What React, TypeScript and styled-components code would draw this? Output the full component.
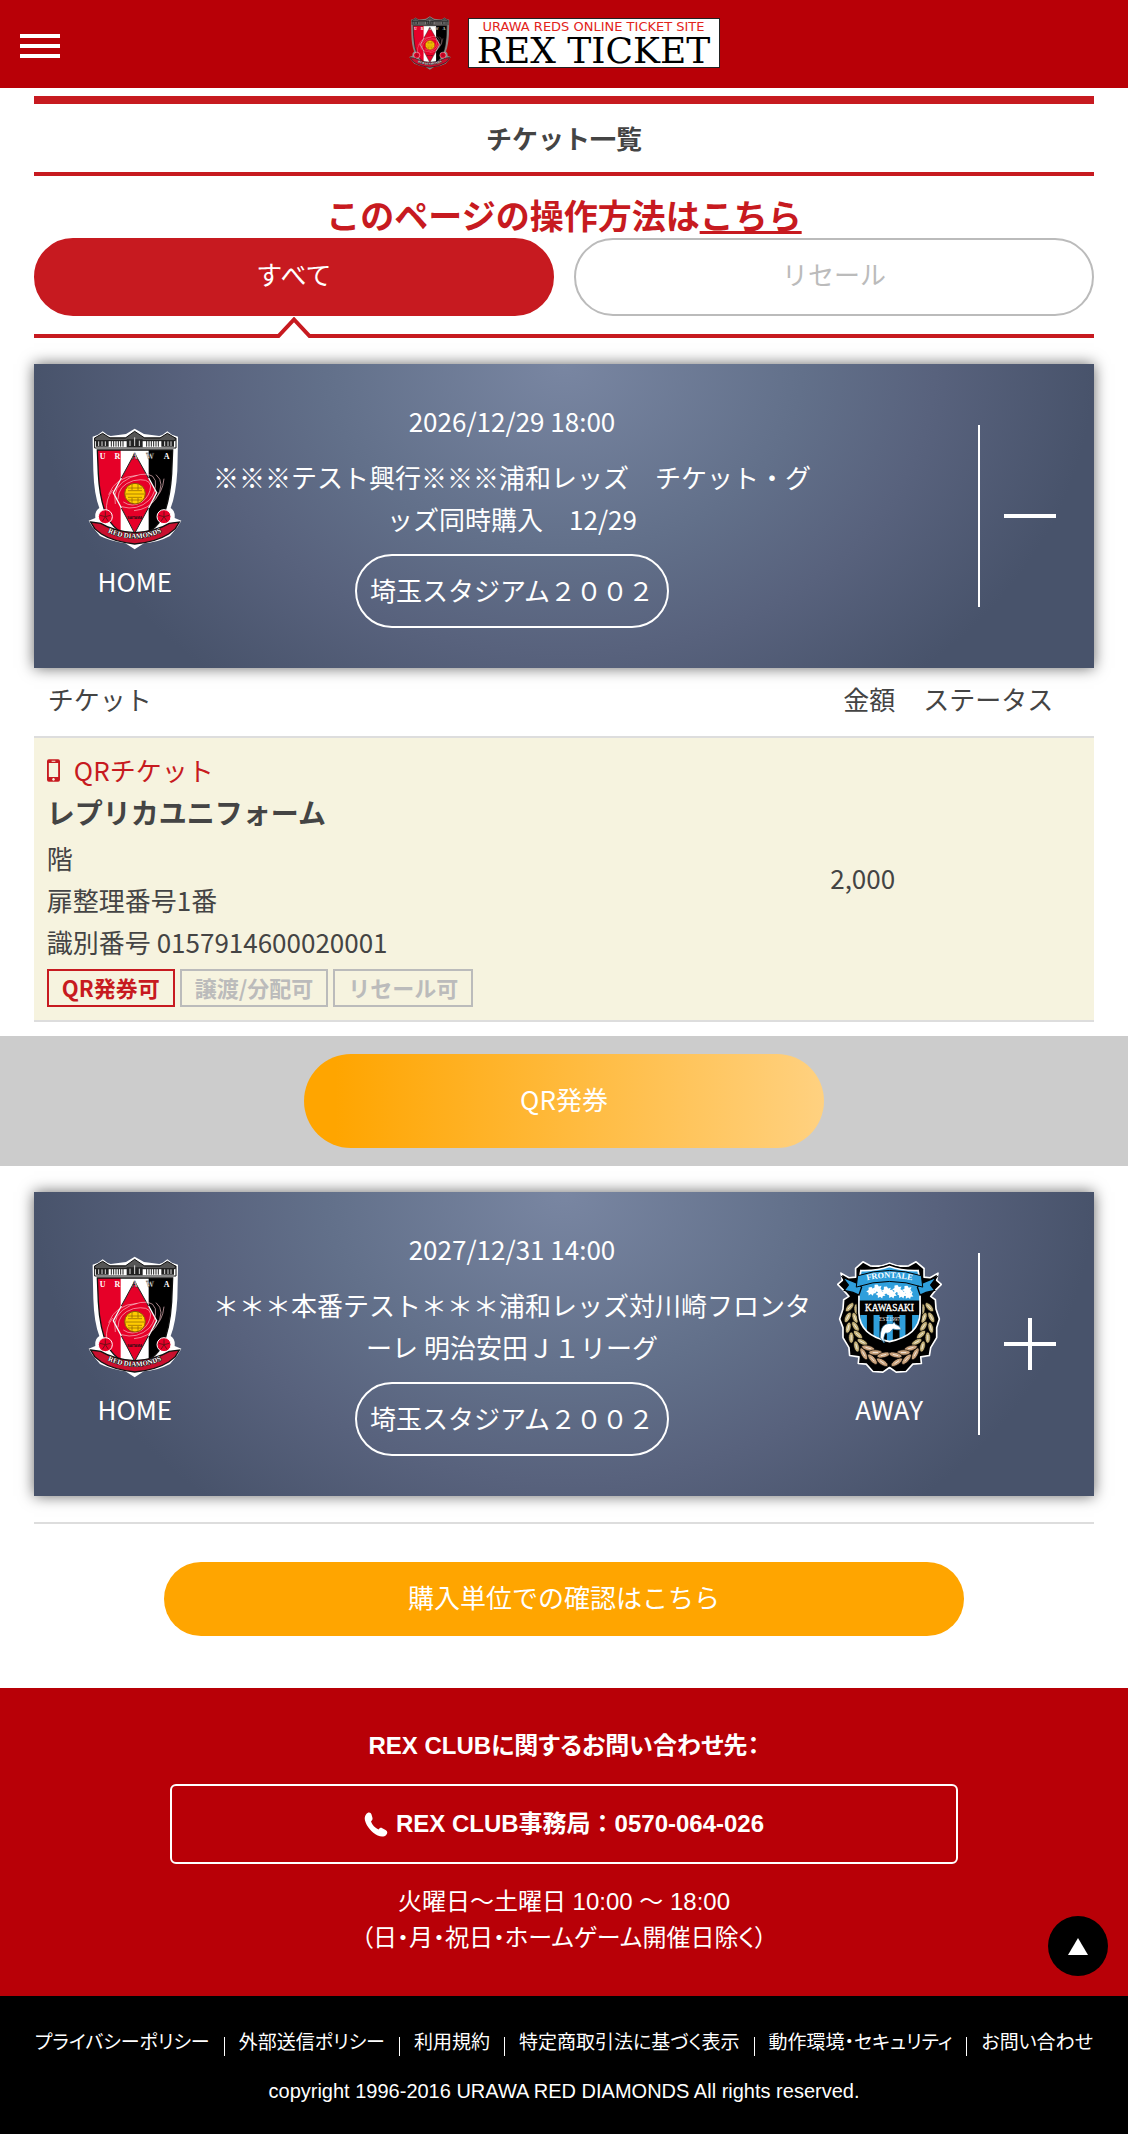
import React from 'react';
import styled, { createGlobalStyle } from 'styled-components';

const RED = '#c71a20';
const DEEP_RED = '#b80007';
const ORANGE = '#ffa500';
const MUTED = '#bbb';

const GlobalStyle = createGlobalStyle`
  *, *::before, *::after { box-sizing: border-box; }
  body {
    margin: 0;
    background: #fff;
    color: #444;
    font-family: "Noto Sans CJK JP", sans-serif;
    font-size: 26px;
    line-height: 42px;
  }
  h1, h2, p, ul { margin: 0; padding: 0; font-size: inherit; }
  button { font: inherit; color: inherit; cursor: pointer; }
  a { color: inherit; }
`;

/* ---------- header ---------- */

const Header = styled.header`
  display: grid;
  grid-template-columns: 1fr auto 1fr;
  align-items: center;
  height: 88px;
  padding: 0 20px;
  background: ${DEEP_RED};
`;

const MenuButton = styled.button`
  display: flex;
  flex-direction: column;
  gap: 6px;
  width: 40px;
  margin-top: 4px;
  padding: 0;
  border: 0;
  background: none;
`;

const MenuBar = styled.span`
  height: 4px;
  background: #fff;
`;

const Brand = styled.a`
  display: flex;
  align-items: center;
  gap: 17px;
  margin-bottom: 3px;
  text-decoration: none;
`;

const BrandPlate = styled.span`
  display: flex;
  flex-direction: column;
  align-items: center;
  width: 252px;
  height: 50px;
  padding-top: 1px;
  border: 1px solid #222;
  background: #fff;
  white-space: nowrap;
`;

const BrandTagline = styled.span`
  font: 13px/14px "DejaVu Sans", sans-serif;
  color: #e2231a;
`;

const BrandName = styled.span`
  font: 36px/34px "DejaVu Serif", serif;
  color: #000;
`;

/* ---------- page frame ---------- */

const Container = styled.div`
  width: 94%;
  margin: 0 auto;
`;

const PageTitle = styled.h1`
  margin-top: 8px;
  border-top: 8px solid ${RED};
  border-bottom: 4px solid ${RED};
  font-weight: 700;
  line-height: 68px;
  text-align: center;
`;

const Guide = styled.p`
  padding: 17px 0 1px;
  color: ${RED};
  font-size: 34px;
  font-weight: 700;
  line-height: 44px;
  text-align: center;
`;

const Tabs = styled.div`
  display: grid;
  grid-template-columns: 1fr 1fr;
  gap: 20px;
`;

const Tab = styled.button<{ $active?: boolean }>`
  height: 78px;
  padding: 0 0 6px;
  border: 2px solid ${p => (p.$active ? RED : MUTED)};
  border-radius: 39px;
  background: ${p => (p.$active ? RED : '#fff')};
  color: ${p => (p.$active ? '#fff' : MUTED)};
`;

const TabLine = styled.div`
  position: relative;
  height: 4px;
  margin-top: 18px;
  background: ${RED};
`;

const TabPointer = styled.svg`
  position: absolute;
  bottom: 0;
  left: calc((100% - 20px) / 4);
  transform: translateX(-50%);
`;

/* ---------- match card ---------- */

const Card = styled.section`
  display: grid;
  grid-template-columns: 142px 1fr 142px 120px;
  align-items: center;
  margin-top: 26px;
  padding: 36px 14px 36px 30px;
  background: radial-gradient(50% 136% at 50% 0, #7986a2, #62708a 45%, #58627d 70%, #48536b);
  box-shadow: 0 0 14px rgba(0, 0, 0, 0.6);
  color: #fff;
  text-align: center;
`;

const Team = styled.div`
  display: flex;
  flex-direction: column;
  align-items: center;
  justify-content: flex-end;
  gap: 10px;
  height: 176px;
  padding-bottom: 2px;
`;

const MatchInfo = styled.div`
  display: flex;
  flex-direction: column;
  align-items: center;
  padding-bottom: 4px;
`;

const MatchName = styled.h2`
  margin: 14px 0;
  padding: 0 6px;
  font-weight: 400;
`;

const Venue = styled.p`
  padding: 0 13px 2px;
  border: 2px solid #fff;
  border-radius: 37px;
  line-height: 68px;
`;

const Toggle = styled.button`
  display: flex;
  align-items: center;
  justify-content: center;
  height: 182px;
  margin-left: 18px;
  padding: 0;
  border: 0;
  border-left: 2px solid #fff;
  background: none;
`;

/* ---------- ticket table ---------- */

const TicketTable = styled.table`
  width: 100%;
  border-spacing: 0;

  th {
    height: 68px;
    padding: 0 14px 6px;
    font-weight: 400;
    text-align: left;
  }
  td {
    padding: 11px 14px 13px;
    border: solid #ddd;
    border-width: 2px 0;
    background: #f6f3df;
  }
  th:nth-child(2), td:nth-child(2) { text-align: right; }
  th:nth-child(3) { width: 185px; }
  td:first-child { padding-left: 13px; }
`;

const TicketKind = styled.p`
  display: flex;
  align-items: center;
  gap: 14px;
  color: ${RED};
`;

const TicketName = styled.p`
  margin-bottom: 4px;
  font-size: 28px;
  font-weight: 700;
`;

const Tags = styled.div`
  display: flex;
  gap: 5px;
  margin-top: 6px;
`;

const Tag = styled.span<{ $on?: boolean }>`
  padding: 0 13px 2px;
  border: 2px solid currentColor;
  color: ${p => (p.$on ? RED : MUTED)};
  font-size: 22px;
  font-weight: 700;
  line-height: 32px;
`;

const IssueBand = styled.div`
  display: flex;
  justify-content: center;
  margin-top: 14px;
  padding: 18px 0;
  background: #ccc;
`;

const IssueButton = styled.button`
  width: 520px;
  height: 94px;
  padding: 0 0 4px;
  border: 0;
  border-radius: 47px;
  background: linear-gradient(90deg, ${ORANGE} 6%, #ffd180);
  color: #fff;
`;

const PurchaseArea = styled.div`
  display: flex;
  justify-content: center;
  margin-top: 26px;
  padding: 38px 0 52px;
  border-top: 2px solid #ddd;
`;

const PurchaseButton = styled.button`
  width: 800px;
  height: 74px;
  padding: 0 0 4px;
  border: 0;
  border-radius: 37px;
  background: ${ORANGE};
  color: #fff;
`;

/* ---------- footer ---------- */

const Contact = styled.section`
  position: relative;
  display: flex;
  flex-direction: column;
  align-items: center;
  padding: 40px 0;
  background: ${DEEP_RED};
  color: #fff;
  font-family: "Liberation Sans", "Noto Sans CJK JP", sans-serif;
  font-feature-settings: "palt";
  font-size: 24px;
  line-height: 36px;
  text-align: center;
`;

const PhoneLink = styled.a`
  display: flex;
  align-items: center;
  justify-content: center;
  gap: 8px;
  width: 788px;
  height: 80px;
  margin: 20px 0;
  border: 2px solid #fff;
  border-radius: 6px;
  font-feature-settings: normal;
  font-weight: 700;
  text-decoration: none;
`;

const ContactTitle = styled.h2`
  font-weight: 700;
`;

const TopButton = styled.button`
  position: absolute;
  right: 20px;
  bottom: 20px;
  display: flex;
  align-items: center;
  justify-content: center;
  width: 60px;
  height: 60px;
  padding: 0;
  border: 0;
  border-radius: 50%;
  background: #000;
`;

const Footer = styled.footer`
  padding: 32px 0 28px;
  background: #000;
  color: #fff;
  font-family: "Liberation Sans", "Noto Sans CJK JP", sans-serif;
  font-feature-settings: "palt";
  font-size: 20px;
  line-height: 30px;
  text-align: center;
`;

const FooterLinks = styled.ul`
  display: flex;
  justify-content: center;
  margin-bottom: 18px;
  font-size: 19px;
  list-style: none;
  white-space: nowrap;

  a { text-decoration: none; }
  li + li {
    display: flex;
    align-items: center;
  }
  li + li::before {
    content: "";
    width: 1px;
    height: 19px;
    margin: 6px 14px 0;
    background: #fff;
  }
`;

/* ---------- drawings ---------- */

const columns = [92, 99, 106, 113, 120, 127, 198, 205, 212, 219, 226, 233];

function UrawaCrest({ width, height, edge = '#fff', id }: { width: number; height: number; edge?: string; id: string }) {
  return (
    <svg width={width} height={height} viewBox="22 22 282 366" role="img" aria-label="浦和レッズ" preserveAspectRatio="none">
      <defs>
        <clipPath id={`${id}-shield`}>
          <path d="M50 88H276L273 160Q268 240 244 296Q205 345 162 360Q119 345 82 296Q57 240 53 160Z" />
        </clipPath>
        <path id={`${id}-ribbon`} d="M76 332Q162 374 248 332" />
      </defs>
      <path
        d="M36 48L52 42L66 32L80 42L90 46L136 40L162 24L190 40L236 46L246 42L260 32L274 42L292 48V62L290 150Q286 220 270 262Q284 270 282 292L302 300L290 320L268 346Q230 366 190 368L162 386L134 368Q90 362 58 346L36 320L24 300L44 292Q42 270 56 262Q40 220 38 150L36 62Z"
        fill={edge}
      />
      <path d="M42 52H286V82H42Z" fill={edge} stroke="#111" strokeWidth="3" />
      <path d="M42 52L66 38L88 52H134L162 32L192 52H238L260 38L284 52V60H42Z" fill="#555" stroke="#111" strokeWidth="3" />
      <path d="M46 60h38v18H46ZM138 56h48v24h-48ZM242 60h38v18h-38Z" fill="#222" />
      <path d="M54 62v14M64 62v14M74 62v14M148 60v16M162 50v26M176 60v16M252 62v14M262 62v14M271 62v14" stroke="#ddd" strokeWidth="3" />
      {columns.map(x => (
        <path key={x} d={`M${x} 60v18`} stroke="#222" strokeWidth="3" />
      ))}
      <g clipPath={`url(#${id}-shield)`}>
        <path d="M40 80h84v290H40z" fill="#e60028" />
        <path d="M120 80h86v290h-86z" fill="#fff" />
        <path d="M204 80h90v290h-90z" fill="#000" />
      </g>
      <path d="M50 88H276L273 160Q268 240 244 296Q205 345 162 360Q119 345 82 296Q57 240 53 160Z" fill="none" stroke="#111" strokeWidth="4" />
      <path d="M162 98L228 216L162 338L98 216Z" fill="#e60028" stroke="#222" strokeWidth="3" />
      <path d="M122 172L98 216L122 262M204 172L228 216L204 262" stroke="#fff" strokeWidth="4" fill="none" />
      <g fill="none" stroke="#f7c3c8" strokeWidth="2">
        <path d="M104 250Q92 196 150 170Q214 146 224 180Q228 212 206 238Q170 272 122 258" />
        <path d="M112 236Q112 194 158 180Q206 170 210 196Q208 226 184 244Q154 262 128 244" />
        <path d="M84 222Q104 168 170 164M226 162Q256 186 226 234Q204 266 160 270M78 272Q74 236 96 208M250 174Q246 218 216 240" />
      </g>
      <circle cx="163" cy="219" r="31" fill="#fc0" stroke="#8a5a00" strokeWidth="3" />
      <path d="M142 202H184M142 210H184M134 220H192M142 230H184M142 238H184M154 190V208M172 190V208M154 232V248M172 232V248" stroke="#8a5a00" strokeWidth="2" />
      <g fill="#fff" fontFamily="Liberation Serif, serif" fontWeight="700" fontSize="24" textAnchor="middle">
        <text x="66" y="114">U</text>
        <text x="110" y="114">R</text>
        <text x="162" y="114" stroke="#222" strokeWidth="1">A</text>
        <text x="208" y="114" stroke="#222" strokeWidth="1">W</text>
        <text x="258" y="114">A</text>
      </g>
      <text x="162" y="296" fill="#111" fontFamily="Liberation Sans, sans-serif" fontWeight="700" fontSize="10" textAnchor="middle">SAITAMA</text>
      {[74, 250].map(x => (
        <g key={x}>
          <circle cx={x} cy="288" r="21" fill="#e60028" stroke="#fff" strokeWidth="3" />
          <path
            d={`M${x} 288L${x} 272M${x} 288L${x + 16} 284M${x} 288L${x + 9} 302M${x} 288L${x - 9} 302M${x} 288L${x - 16} 284`}
            stroke="#701018"
            strokeWidth="3"
          />
        </g>
      ))}
      <path
        d="M30 304L60 308Q100 332 162 336Q226 332 266 308L296 304L284 324L264 340Q226 364 162 370Q96 362 62 340L42 324Z"
        fill="#c8102e"
        stroke="#111"
        strokeWidth="4"
      />
      <text fill="#fff" stroke="#111" strokeWidth="3" paintOrder="stroke" fontFamily="Liberation Serif, serif" fontWeight="700" fontSize="21" textAnchor="middle">
        <textPath href={`#${id}-ribbon`} startOffset="50%">RED DIAMONDS</textPath>
      </text>
    </svg>
  );
}

const leafAngles = [198, 184, 170, 156, 142, 128, 114, 100];

function laurel() {
  return leafAngles.flatMap((deg, i) => {
    const a = (deg * Math.PI) / 180;
    const tint = i > 4 ? '#c9a27c' : '#c3b078';
    return [126, 104].map((r, side) => {
      const x = 270 + Math.cos(a) * r;
      const y = 418 + Math.sin(a) * (r + 2);
      const turn = deg - 90 + (side === 0 ? 24 : -24);
      return (
        <g key={`${deg}-${side}`} transform={`translate(${x} ${y}) rotate(${turn})`}>
          <ellipse rx={i > 4 ? 20 : 17} ry="8" fill={tint} stroke="#000" strokeWidth="2" />
          <path d="M-7 0H7" stroke="#fff" strokeWidth="2" strokeLinecap="round" />
        </g>
      );
    });
  });
}

const blossoms = [[216, 328], [234, 320], [244, 336], [262, 326], [278, 336], [294, 322], [308, 336], [324, 324], [328, 338]];

function KawasakiCrest() {
  return (
    <svg width="105" height="122" viewBox="112 238 316 340" role="img" aria-label="川崎フロンターレ">
      <defs>
        <clipPath id="kf-shield">
          <path d="M184 268Q232 270 270 256Q308 270 356 268L362 300V396Q360 464 270 482Q180 464 178 396V300Z" />
        </clipPath>
        <path id="kf-ribbon" d="M184 302Q270 278 356 302" />
      </defs>
      <path
        d="M190 242L212 254Q245 258 270 246Q295 258 328 254L350 242L374 262V288L392 290L416 276L412 298L426 310L408 328L394 346L408 356L410 384L420 414L412 440L412 470L394 500L390 524L364 528L366 548L340 550L320 572L290 574L270 560L250 574L220 572L200 550L176 548L178 528L150 524L148 500L130 470L130 440L120 414L130 384L132 356L148 346L132 328L114 310L128 298L124 276L148 290L168 288V262Z"
        fill="#000"
        stroke="#fff"
        strokeWidth="5"
        strokeLinejoin="round"
      />
      {laurel()}
      <g transform="translate(540 0) scale(-1 1)">{laurel()}</g>
      <path d="M184 268Q232 270 270 256Q308 270 356 268L362 300V396Q360 464 270 482Q180 464 178 396V300Z" fill="#000" stroke="#000" strokeWidth="14" />
      <g clipPath="url(#kf-shield)">
        <path d="M170 250h200v108H170z" fill="#2f9fdc" />
        <path d="M182 402h20v90h-20zM222 402h18v90h-18zM262 402h18v90h-18zM300 402h18v90h-18zM338 402h20v90h-20z" fill="#2f9fdc" />
      </g>
      <path d="M184 268Q232 270 270 256Q308 270 356 268L362 300V396Q360 464 270 482Q180 464 178 396V300Z" fill="none" stroke="#fff" strokeWidth="5" />
      {blossoms.map(([x, y]) => (
        <path
          key={`${x}`}
          d={`M${x} ${y - 10}l4 6l8-2l-3 8l5 6l-8 1l-2 7l-6-5l-7 4l0-8l-7-4l7-4l0-8z`}
          fill="#fff"
        />
      ))}
      <path d="M128 288L172 306L186 318L178 342L160 334L134 328L146 312ZM412 288L368 306L354 318L362 342L380 334L406 328L394 312Z" fill="#2f9fdc" stroke="#000" strokeWidth="4" />
      <path d="M174 284Q270 252 366 284L370 318Q270 284 170 318Z" fill="#2f9fdc" stroke="#000" strokeWidth="3" />
      <text fill="#fff" fontFamily="Liberation Serif, serif" fontWeight="700" fontSize="25" textAnchor="middle">
        <textPath href="#kf-ribbon" startOffset="50%">FRONTALE</textPath>
      </text>
      <text x="270" y="391" fill="#fff" stroke="#fff" fontFamily="Liberation Serif, serif" fontSize="28" textAnchor="middle">KAWASAKI</text>
      <text x="270" y="419" fill="#fff" fontFamily="Liberation Serif, serif" fontSize="16" textAnchor="middle">EST.1997</text>
      <path d="M246 444Q254 424 280 428L284 422L288 430Q302 434 306 446Q292 448 280 444Q270 460 258 456Q250 468 254 486L242 470Q242 456 246 444Z" fill="#fff" stroke="#1674ab" strokeWidth="2" />
    </svg>
  );
}

function PhoneHandset() {
  return (
    <svg width="24" height="26" viewBox="0 0 24 26" aria-hidden="true">
      <path
        d="M2 3.500C4 .8 6.800 1 7.500 3.600L8.400 6.600C8.900 8.400 8.200 9.400 7 10.600C8.200 14 11 17 14.500 18.600C15.600 17 16.800 16.400 18.300 17.200L21.600 19C23.600 20.200 23.900 22 22.200 24C20.200 26 17 26 13.700 24.400C7.500 21.200 2.600 15.400 1 9.400C.4 7 .8 5.200 2 3.500Z"
        fill="#fff"
      />
    </svg>
  );
}

function Smartphone() {
  return (
    <svg width="13" height="23" viewBox="0 0 14 24" aria-hidden="true">
      <path fillRule="evenodd" fill={RED} d="M2 0H12a2 2 0 0 1 2 2V22a2 2 0 0 1-2 2H2a2 2 0 0 1-2-2V2a2 2 0 0 1 2-2ZM2 4V19H12V4ZM5 1.500V2.500H9V1.500ZM7 20.200a1.400 1.400 0 1 0 .01 0Z" />
    </svg>
  );
}

function ToggleSign({ open }: { open: boolean }) {
  return (
    <svg width="52" height="52" viewBox="0 0 52 52" aria-hidden="true">
      <path d={open ? 'M0 26H52' : 'M0 26H52M26 0V52'} stroke="#fff" strokeWidth="4" />
    </svg>
  );
}

/* ---------- composition ---------- */

interface MatchProps {
  id: string;
  date: string;
  name: string;
  venue: string;
  open: boolean;
  away?: React.ReactNode;
}

function Match({ id, date, name, venue, open, away }: MatchProps) {
  return (
    <Card>
      <Team>
        <UrawaCrest id={id} width={94} height={122} />
        <span>HOME</span>
      </Team>
      <MatchInfo>
        <p>{date}</p>
        <MatchName>{name}</MatchName>
        <Venue>{venue}</Venue>
      </MatchInfo>
      {away ? (
        <Team>
          {away}
          <span>AWAY</span>
        </Team>
      ) : (
        <span />
      )}
      <Toggle type="button" aria-expanded={open} aria-label="詳細の開閉">
        <ToggleSign open={open} />
      </Toggle>
    </Card>
  );
}

const footerLinks = ['プライバシーポリシー', '外部送信ポリシー', '利用規約', '特定商取引法に基づく表示', '動作環境・セキュリティ', 'お問い合わせ'];

export default function App() {
  return (
    <>
      <GlobalStyle />
      <Header>
        <MenuButton type="button" aria-label="メニュー">
          <MenuBar />
          <MenuBar />
          <MenuBar />
        </MenuButton>
        <Brand href="#">
          <UrawaCrest id="brand" width={42} height={54} edge="#8b8584" />
          <BrandPlate>
            <BrandTagline>URAWA REDS ONLINE TICKET SITE</BrandTagline>
            <BrandName>REX TICKET</BrandName>
          </BrandPlate>
        </Brand>
      </Header>

      <main>
        <Container>
          <PageTitle>チケット一覧</PageTitle>
          <Guide>
            このページの操作方法は<a href="#">こちら</a>
          </Guide>
          <Tabs>
            <Tab type="button" $active>すべて</Tab>
            <Tab type="button">リセール</Tab>
          </Tabs>
          <TabLine>
            <TabPointer width="34" height="21" viewBox="0 0 34 21" aria-hidden="true">
              <path d="M0 21L17 1L34 21Z" fill="#fff" />
              <path d="M0 19H1.500L17 2.500L32.500 19H34" fill="none" stroke={RED} strokeWidth="4" />
            </TabPointer>
          </TabLine>

          <Match
            id="first"
            date="2026/12/29 18:00"
            name="※※※テスト興行※※※浦和レッズ　チケット・グッズ同時購入　12/29"
            venue="埼玉スタジアム２００２"
            open
          />
          <TicketTable>
            <thead>
              <tr>
                <th scope="col">チケット</th>
                <th scope="col">金額</th>
                <th scope="col">ステータス</th>
              </tr>
            </thead>
            <tbody>
              <tr>
                <td>
                  <TicketKind>
                    <Smartphone />
                    QRチケット
                  </TicketKind>
                  <TicketName>レプリカユニフォーム</TicketName>
                  <p>階</p>
                  <p>扉整理番号1番</p>
                  <p>識別番号 0157914600020001</p>
                  <Tags>
                    <Tag $on>QR発券可</Tag>
                    <Tag>譲渡/分配可</Tag>
                    <Tag>リセール可</Tag>
                  </Tags>
                </td>
                <td>2,000</td>
                <td />
              </tr>
            </tbody>
          </TicketTable>
        </Container>

        <IssueBand>
          <IssueButton type="button">QR発券</IssueButton>
        </IssueBand>

        <Container>
          <Match
            id="second"
            date="2027/12/31 14:00"
            name="＊＊＊本番テスト＊＊＊浦和レッズ対川崎フロンターレ 明治安田Ｊ１リーグ"
            venue="埼玉スタジアム２００２"
            open={false}
            away={<KawasakiCrest />}
          />
          <PurchaseArea>
            <PurchaseButton type="button">購入単位での確認はこちら</PurchaseButton>
          </PurchaseArea>
        </Container>
      </main>

      <Contact>
        <ContactTitle>REX CLUBに関するお問い合わせ先：</ContactTitle>
        <PhoneLink href="tel:0570064026">
          <PhoneHandset />
          <span>REX CLUB事務局：0570-064-026</span>
        </PhoneLink>
        <p>火曜日～土曜日 10:00 ～ 18:00</p>
        <p>（日・月・祝日・ホームゲーム開催日除く）</p>
        <TopButton type="button" aria-label="ページの先頭へ">
          <svg width="20" height="17" viewBox="0 0 20 17" aria-hidden="true">
            <path d="M10 0L20 17H0Z" fill="#fff" />
          </svg>
        </TopButton>
      </Contact>
      <Footer>
        <FooterLinks>
          {footerLinks.map(label => (
            <li key={label}>
              <a href="#">{label}</a>
            </li>
          ))}
        </FooterLinks>
        <p>copyright 1996-2016 URAWA RED DIAMONDS All rights reserved.</p>
      </Footer>
    </>
  );
}
